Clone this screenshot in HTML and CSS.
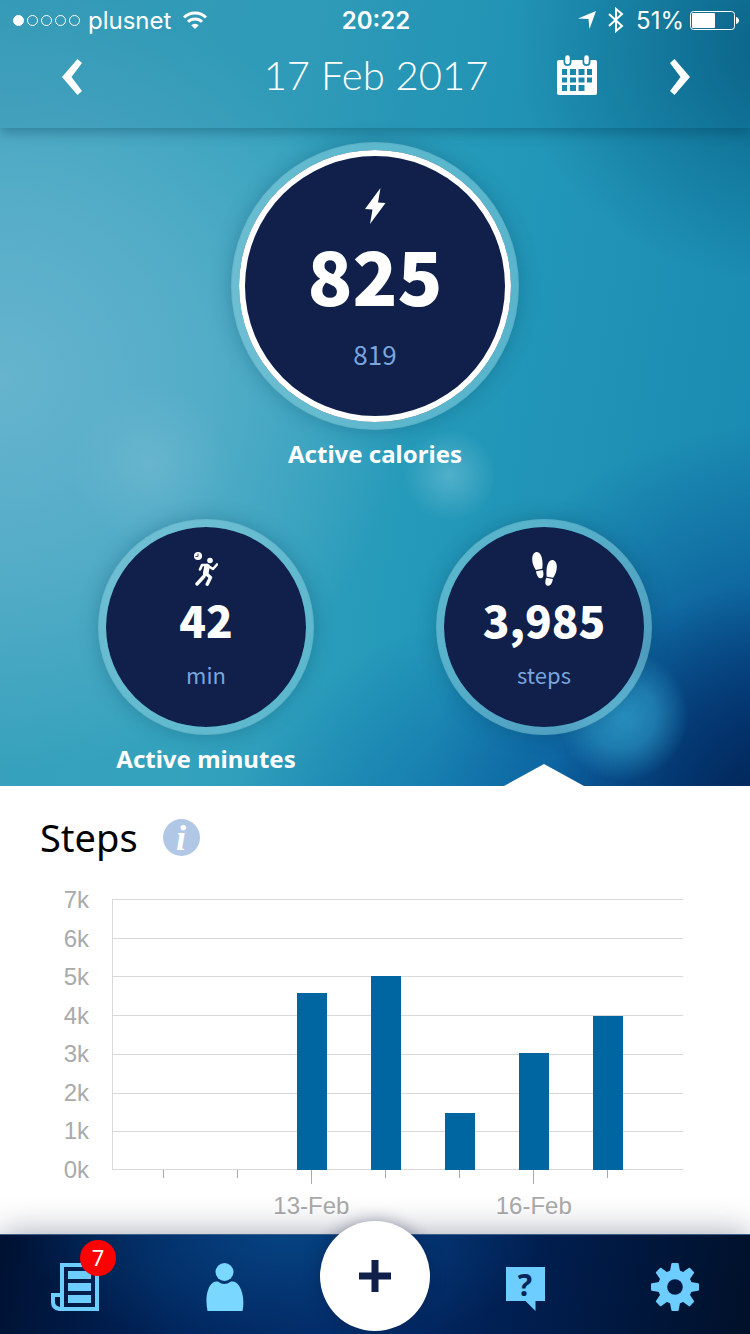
FILE: index.html
```html
<!DOCTYPE html>
<html lang="en">
<head>
    <meta charset="UTF-8">
    <meta name="viewport" content="width=device-width, initial-scale=1.0">
    <title>Steps - 17 Feb 2017</title>
    <link rel="stylesheet" href="styles.css">
</head>
<body>
    <div class="hero">
        <header class="header">
            <div class="status">
                <div class="status-left">
                    <span class="signal"><i class="on"></i><i></i><i></i><i></i><i></i></span>
                    <span>plusnet</span>
                    <svg class="wifi" width="24" height="18" viewBox="0 0 24 18" fill="none" stroke="#fff" stroke-width="3">
                        <path d="M1 6.5a15.5 15.5 0 0 1 22 0"/>
                        <path d="M5 10.8a10 10 0 0 1 14 0"/>
                        <path d="M8.2 14.2a5.4 5.4 0 0 1 7.6 0L12 18z" fill="#fff" stroke="none"/>
                    </svg>
                </div>
                <span class="clock">20:22</span>
                <div class="status-right">
                    <svg width="18" height="18" viewBox="0 0 18 18" fill="#fff"><path d="M18 0L11.5 18L10.5 8L0 7.5z"/></svg>
                    <svg class="bluetooth" width="16" height="26" viewBox="0 0 16 26" fill="none" stroke="#fff" stroke-width="2"><path d="M1 7l13 12-6 5V2l6 5L1 19"/></svg>
                    <span>51%</span>
                    <svg class="battery" width="49" height="19" viewBox="0 0 49 19">
                        <rect x=".5" y=".5" width="44" height="18" rx="3" fill="none" stroke="#fff"/>
                        <rect x="2" y="2" width="23" height="15" rx="1" fill="#fff"/>
                        <path d="M46 6q3 1 3 3.500t-3 3.500z" fill="#fff"/>
                    </svg>
                </div>
            </div>
            <div class="date-bar">
                <button class="icon-button" aria-label="Previous day">
                    <svg width="21" height="36" viewBox="0 0 21 36" fill="#fff"><path d="M15.500 0L20 4L9.500 18L20 32L15.500 36L0 18z"/></svg>
                </button>
                <h1 class="date">17 Feb 2017</h1>
                <div class="date-actions">
                    <button class="icon-button" aria-label="Calendar">
                        <svg class="calendar" width="41" height="41" viewBox="0 0 41 41">
                            <path fill="#fff" fill-rule="evenodd" d="M2 5h36q2 0 2 2v31q0 2-2 2H2q-2 0-2-2V7q0-2 2-2zM5 14v6h5v-6zm8 0v6h6v-6zm8.500 0v6h6v-6zm8.500 0v6h5v-6zM5 22.500v5h5v-5zm8 0v5h6v-5zm8.500 0v5h6v-5zm8.500 0v5h5v-5zM5 30v6h5v-6zm8 0v6h6v-6zm8.500 0v6h6v-6z"/>
                            <path d="M10.500 5v2M29.500 5v2" stroke="#1b88ab" stroke-width="8" stroke-linecap="round"/>
                            <path d="M10.500 2.500v4.500M29.500 2.500v4.500" stroke="#fff" stroke-width="4.500" stroke-linecap="round"/>
                        </svg>
                    </button>
                    <button class="icon-button" aria-label="Next day">
                        <svg width="21" height="36" viewBox="0 0 21 36" fill="#fff"><path d="M5.500 0L21 18L5.500 36L1 32L11.500 18L1 4z"/></svg>
                    </button>
                </div>
            </div>
        </header>

        <main class="goals">
            <section class="goal goal-main">
                <div class="circle circle-big">
                    <svg width="21" height="36" viewBox="0 0 21 36" fill="#fff"><path d="M15.500 0L0 21L7.500 21.500L5 36L20.500 15L13 14.500z"/></svg>
                    <strong class="value">825</strong>
                    <span class="unit">819</span>
                </div>
                <h2 class="goal-name">Active calories</h2>
            </section>
            <section class="goal">
                <div class="circle">
                    <svg width="24" height="34" viewBox="0 0 24 34" fill="none" stroke="#fff" stroke-linecap="round" stroke-linejoin="round">
                        <circle cx="4" cy="4" r="4" fill="#fff" stroke="none"/>
                        <path d="M4 2v2.500H1.800" stroke="#10204b" stroke-width=".8"/>
                        <circle cx="16" cy="8.500" r="2.800" fill="#fff" stroke="none"/>
                        <path d="M13 14.500l-1.300 7" stroke-width="5.600"/>
                        <path d="M12.500 13L8 13l-2 4.500M15 14.500l4 2.500 4-4.500" stroke-width="2.600"/>
                        <path d="M12 21.500l4.500 4-3.300 6.800M9.800 24.500L3 32" stroke-width="3.400"/>
                    </svg>
                    <strong class="value">42</strong>
                    <span class="unit">min</span>
                </div>
                <h2 class="goal-name">Active minutes</h2>
            </section>
            <section class="goal goal-selected">
                <div class="circle">
                    <svg width="25" height="34" viewBox="0 0 25 34" fill="#fff">
                        <path d="M.2 7C.2 2.500 2.400 0 4.800 0c3 0 5.200 4 5.600 9.500.2 3 .2 5-.2 7.200L3.800 18C1.500 14.500.2 11 .2 7z"/>
                        <path d="M4 19.200l6.700-1.300c.8 2.200 1 4.500.4 6.500-.7 2.200-3.700 2.400-5 .6-1-1.500-1.700-3.500-2.100-5.800z"/>
                        <path d="M24.800 15c0-4.500-2.200-7-4.600-7-3 0-5.200 4-5.600 9.500-.2 3-.2 5 .2 7.200l6.400 1c2.300-3.500 3.600-6.700 3.600-10.700z"/>
                        <path d="M20.800 27l-6.500-1.200c-.8 2-1.200 4-.9 5.700.4 2.300 3.400 3.200 5.200 1.200 1.200-1.400 2-3.400 2.200-5.700z"/>
                    </svg>
                    <strong class="value">3,985</strong>
                    <span class="unit">steps</span>
                </div>
            </section>
        </main>
    </div>

    <section class="panel">
        <div class="panel-head">
            <h2 class="panel-title">Steps</h2>
            <button class="info" aria-label="About steps">i</button>
        </div>
        <div class="chart">
            <div class="y-axis">
                <span>7k</span><span>6k</span><span>5k</span><span>4k</span><span>3k</span><span>2k</span><span>1k</span><span>0k</span>
            </div>
            <div class="plot">
                <div class="grid-lines"><i></i><i></i><i></i><i></i><i></i><i></i><i></i></div>
                <div class="bars">
                    <div class="bar" style="height: 0%"></div>
                    <div class="bar" style="height: 0%"></div>
                    <div class="bar" style="height: 65.300%"></div>
                    <div class="bar" style="height: 71.700%"></div>
                    <div class="bar" style="height: 20.900%"></div>
                    <div class="bar" style="height: 43.100%"></div>
                    <div class="bar" style="height: 56.900%"></div>
                </div>
            </div>
            <div class="x-axis">
                <div class="tick"></div>
                <div class="tick"></div>
                <div class="tick tick-long"><span>13-Feb</span></div>
                <div class="tick"></div>
                <div class="tick"></div>
                <div class="tick tick-long"><span>16-Feb</span></div>
                <div class="tick"></div>
            </div>
        </div>
    </section>

    <nav class="tabs">
        <a class="tab" href="#news" aria-label="News">
            <svg width="48" height="48" viewBox="0 0 48 48" fill="#6dcdff">
                <path fill-rule="evenodd" d="M9 0h39v48H8q-8-1-8-9v-9h9zM13 4v40h31V4zM4 34v5q0 4 5 5V34z"/>
                <path d="M17 8h23v8H17zM17 20h23v8H17zM17 32h23v8H17z"/>
            </svg>
            <span class="badge">7</span>
        </a>
        <a class="tab" href="#profile" aria-label="Profile">
            <svg width="38" height="48" viewBox="0 0 38 48" fill="#7ad7ff">
                <circle cx="18.500" cy="9" r="9"/>
                <path d="M1.500 48C-1 36 1 24 7 19.500q2-1.500 5-1 6 5 13 0 3-.5 5 1C36 24 39 36 36.500 48z"/>
            </svg>
        </a>
        <button class="add" aria-label="Add">
            <svg width="32" height="32" viewBox="0 0 32 32" fill="#10204b"><path d="M12.500 0h7v12.500H32v7H19.500V32h-7V19.500H0v-7h12.500z"/></svg>
        </button>
        <a class="tab" href="#help" aria-label="Help">
            <svg width="39" height="48" viewBox="0 -4 39 48">
                <path d="M0 0h39v34h-9.500v10L19.500 34H0z" fill="#6dcdff"/>
                <text class="question" x="19" y="29" text-anchor="middle">?</text>
            </svg>
        </a>
        <a class="tab" href="#settings" aria-label="Settings">
            <svg width="48" height="48" viewBox="-24 -24 48 48" fill="#6dcdff">
                <path id="teeth" d="M-5-16l1.300-7q.2-1 1-1h5.400q.8 0 1 1L5-16V16l-1.300 7q-.2 1-1 1h-5.400q-.8 0-1-1L-5 16z"/>
                <use href="#teeth" transform="rotate(45)"/>
                <use href="#teeth" transform="rotate(90)"/>
                <use href="#teeth" transform="rotate(135)"/>
                <circle r="17"/>
                <circle r="7.800" fill="#001840"/>
            </svg>
        </a>
    </nav>
</body>
</html>
```
FILE: styles.css
```css
* {
    box-sizing: border-box;
}

body {
    display: flex;
    flex-direction: column;
    min-height: 100vh;
    margin: 0;
    background-color: #fff;
    font-family: "Noto Sans", sans-serif;
}

h1, h2 {
    margin: 0;
}

svg {
    display: block;
}

button {
    border: none;
    padding: 0;
    cursor: pointer;
}

/* top part */
.hero {
    color: #fff;
    background:
        radial-gradient(circle 46px at 60% 60.500%, rgba(125, 200, 220, 0.5), rgba(125, 200, 220, 0.3) 40%, transparent),
        radial-gradient(circle 66px at 83% 91%, rgba(45, 155, 200, 0.85), rgba(45, 155, 200, 0.6) 50%, transparent),
        radial-gradient(circle 80px at 20% 59%, rgba(125, 190, 212, 0.45), rgba(125, 190, 212, 0.2) 50%, transparent),
        radial-gradient(ellipse 30% 30% at 103% 104%, #022a5e 20%, transparent),
        radial-gradient(ellipse 46% 42% at 104% 96%, rgba(3, 65, 140, 0.95), rgba(5, 75, 145, 0.5) 55%, transparent),
        radial-gradient(ellipse 50% 32% at 80% 108%, rgba(10, 100, 165, 0.95), rgba(15, 110, 170, 0.5) 60%, transparent),
        radial-gradient(ellipse 36% 30% at 105% 6%, rgba(5, 85, 120, 0.8), rgba(5, 90, 125, 0.4) 50%, transparent),
        radial-gradient(ellipse 55% 50% at 0% 48%, #66b4ce, rgba(102, 180, 206, 0.6) 50%, transparent),
        linear-gradient(100deg, #38a0bb 0%, #34a2bd 35%, #2499b9 58%, #1888b0 100%);
}

.header {
    padding-bottom: 14px;
    background-color: rgba(20, 110, 145, 0.12);
    box-shadow: 0 4px 12px rgba(0, 50, 75, 0.35);
}

.status {
    display: grid;
    grid-template-columns: 1fr auto 1fr;
    align-items: center;
    height: 40px;
    padding: 0 11px 0 13px;
    font-family: "Inter", sans-serif;
    font-size: 24px;
}

.status-left, .status-right {
    display: flex;
    align-items: center;
}

.status-right {
    justify-content: flex-end;
}

.signal {
    display: flex;
    gap: 3px;
    margin-right: 8px;
}

.signal i {
    width: 11px;
    height: 11px;
    border: 1px solid #fff;
    border-radius: 50%;
}

.signal .on {
    background-color: #fff;
}

.wifi {
    margin-left: 12px;
}

.clock {
    font-weight: 600;
}

.bluetooth {
    margin: 0 12px;
}

.battery {
    margin-left: 6px;
}

.date-bar {
    display: grid;
    grid-template-columns: 1fr auto 1fr;
    align-items: center;
    height: 74px;
    padding: 0 60px 0 62px;
}

.icon-button {
    justify-self: start;
    background: none;
}

.calendar {
    margin-bottom: 4px;
}

.date {
    padding-bottom: 4px;
    font-family: "Lato", sans-serif;
    font-weight: 300;
    font-size: 40px;
    line-height: 48px;
}

.date-actions {
    display: flex;
    align-items: center;
    justify-content: flex-end;
    gap: 71px;
}

.goals {
    display: grid;
    grid-template-columns: 1fr 1fr;
    row-gap: 38px;
    padding: 14px 37px 0;
}

.goal {
    display: flex;
    flex-direction: column;
    align-items: center;
    gap: 8px;
    padding-bottom: 11px;
}

.goal-main {
    grid-column: 1 / 3;
}

.goal-name {
    font-weight: 700;
    font-size: 24px;
    line-height: 32px;
}

.circle {
    display: flex;
    flex-direction: column;
    align-items: center;
    width: 216px;
    height: 216px;
    padding-top: 25px;
    border: 8px solid rgba(135, 205, 220, 0.55);
    border-radius: 50%;
    background-color: #10204b;
    background-clip: padding-box;
    box-shadow: 0 0 20px rgba(0, 60, 90, 0.3);
    font-family: "Noto Sans CJK SC", sans-serif;
}

.value {
    margin-top: 8px;
    font-weight: 900;
    font-size: 44px;
    line-height: 50px;
}

.unit {
    margin-top: 14px;
    color: #7aa5de;
    font-weight: 400;
    font-size: 22px;
    line-height: 32px;
}

.circle-big {
    width: 288px;
    height: 288px;
    padding-top: 38px;
    box-shadow: inset 0 0 0 6px #fff, 0 0 20px rgba(0, 60, 90, 0.3);
}

.circle-big .value {
    font-size: 74px;
    line-height: 84px;
}

.circle-big .unit {
    margin-top: 22px;
    font-size: 26px;
}

.goal-selected {
    position: relative;
}

/* arrow that joins the chosen goal with its chart */
.goal-selected::after {
    content: "";
    position: absolute;
    bottom: 0;
    border: solid transparent;
    border-width: 0 40px 22px;
    border-bottom-color: #fff;
}

/* chart */
.panel {
    flex: 1;
    padding: 26px 40px 12px;
}

.panel-head {
    display: flex;
    align-items: center;
    gap: 25px;
}

.panel-title {
    font-weight: 400;
    font-size: 38px;
    line-height: 50px;
}

.info {
    width: 37px;
    height: 37px;
    border-radius: 50%;
    background-color: #b1c7e6;
    color: #fff;
    font: italic bold 36px/38px "Liberation Serif", serif;
}

.chart {
    display: grid;
    grid-template-columns: 49px 1fr;
    column-gap: 23px;
    padding-right: 27px;
    margin-top: 24px;
    color: #aaa;
    font-family: "Liberation Sans", sans-serif;
    font-size: 24px;
    line-height: 28px;
}

.y-axis {
    display: flex;
    flex-direction: column;
    justify-content: space-between;
    height: 298px;
    text-align: right;
}

.plot {
    display: grid;
    height: 271px;
    margin-top: 13px;
    border-left: 1px solid #d9d9d9;
    border-bottom: 1px solid #d9d9d9;
}

.grid-lines, .bars {
    grid-area: 1 / 1;
}

.grid-lines {
    display: flex;
    flex-direction: column;
}

.grid-lines i {
    flex: 1;
    border-top: 1px solid #d9d9d9;
}

.bars, .x-axis {
    display: grid;
    grid-template-columns: repeat(7, 1fr);
    justify-items: center;
    padding: 0 38px 0 14px;
}

.bars {
    align-items: end;
    height: 271px;
}

.bar {
    width: 30px;
    background-color: #0066a1;
}

.x-axis {
    grid-column: 2;
    height: 52px;
    margin-top: -14px;
}

.tick {
    display: flex;
    flex-direction: column;
    align-items: center;
    white-space: nowrap;
    width: 0;
}

.tick::before {
    content: "";
    flex: none;
    width: 1px;
    height: 8px;
    background-color: #aaa;
}

.tick-long::before {
    height: 14px;
}

.tick span {
    margin-top: 8px;
}

/* bottom navigation */
.tabs {
    display: grid;
    grid-template-columns: repeat(5, 1fr);
    align-items: end;
    justify-items: center;
    padding: 28px 0 23px;
    border-top: 1px solid #39608a;
    background:
        radial-gradient(ellipse 35% 120% at 38% 0%, #064281, transparent),
        linear-gradient(100deg, #001233 0%, #00235a 25%, #032a68 50%, #001f52 68%, #001029 100%);
    box-shadow: 0 0 34px rgba(20, 30, 60, 0.4);
}

.tab {
    position: relative;
}

.badge {
    position: absolute;
    top: -23px;
    right: -17px;
    width: 36px;
    height: 36px;
    border-radius: 50%;
    background-color: #f00;
    color: #fff;
    font-size: 22px;
    line-height: 34px;
    text-align: center;
}

.question {
    fill: #02255a;
    font-family: "Noto Sans", sans-serif;
    font-weight: 700;
    font-size: 30px;
}

.add {
    display: flex;
    align-items: center;
    justify-content: center;
    width: 110px;
    height: 110px;
    margin: -42px 0 -20px;
    border-radius: 50%;
    background-color: #fff;
    box-shadow: 0 0 16px rgba(10, 25, 60, 0.4);
}
```
